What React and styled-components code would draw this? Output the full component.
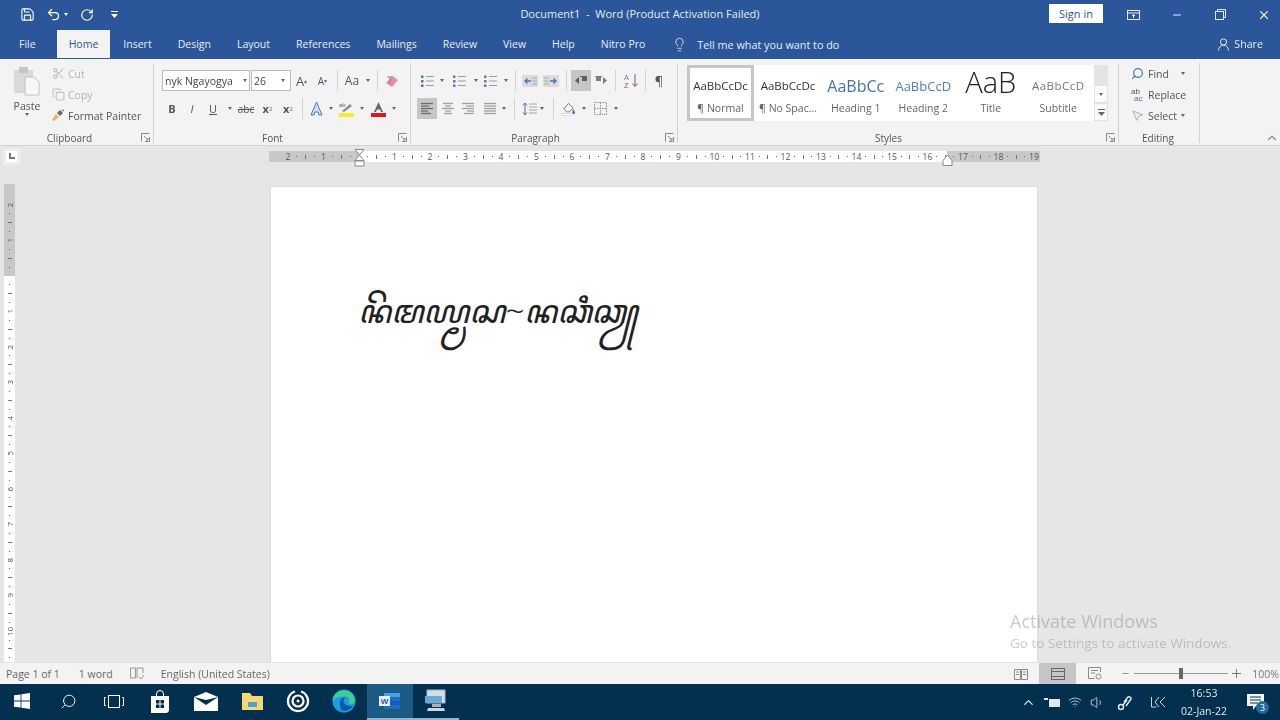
import React from 'react';
import styled, { createGlobalStyle } from 'styled-components';
import { Save, Undo2, RotateCw, Scissors, Copy, Lightbulb, UserRound, Search, Minus, X, ChevronUp, Volume1, Wifi, MousePointer2 } from 'lucide-react';

const Global = createGlobalStyle`
  html, body { margin: 0; padding: 0; background: #e6e6e6; }
  body { font-family: "Open Sans", "Liberation Sans", sans-serif; }
`;

const Screen = styled.div`
  position: relative;
  width: 1280px;
  height: 720px;
  overflow: hidden;
  display: flex;
  flex-direction: column;
  filter: blur(0.35px);
`;

/* title bar */
const TitleBar = styled.div`
  height: 29px;
  background: #2b579a;
  display: flex;
  align-items: center;
  color: #fff;
  flex: none;
`;
const Quick = styled.div`
  width: 1049px;
  flex: none;
  display: flex;
  align-items: center;
  position: relative;
  padding-left: 19px;
  box-sizing: border-box;
`;
const DocTitle = styled.div`
  position: absolute;
  left: 0;
  right: -231px;
  top: -1px;
  line-height: 16px;
  text-align: center;
  font-size: 11px;
  color: #e4eaf4;
  pointer-events: none;
`;
const QuickBtn = styled.span`
  display: inline-flex;
  width: ${p => p.$w || 16}px;
  margin-right: ${p => p.$mr || 0}px;
  justify-content: center;
  align-items: center;
`;
const SignIn = styled.div`
  width: 54px;
  height: 19px;
  flex: none;
  margin-top: -2px;
  background: #fff;
  color: #2b579a;
  font-size: 11px;
  display: flex;
  align-items: center;
  justify-content: center;
`;
const WinBtns = styled.div`
  display: flex;
  flex: none;
  margin-left: 9px;
`;
const WinBtn = styled.span`
  width: 43.5px;
  flex: none;
  display: flex;
  justify-content: center;
  align-items: center;
`;

/* tab row */
const TabBar = styled.div`
  height: 30px;
  background: #2b579a;
  display: flex;
  align-items: flex-end;
  padding-left: 6px;
  flex: none;
  border-bottom: 1px solid #2b579a;
  box-sizing: border-box;
`;
const Tab = styled.div`
  height: 28px;
  padding: 0 ${p => p.$pad || 13}px;
  margin-right: ${p => p.$mr || 0}px;
  display: flex;
  align-items: center;
  font-size: 10.5px;
  color: ${p => (p.$active ? '#2b579a' : '#e6ecf5')};
  background: ${p => (p.$active ? '#f3f3f3' : 'transparent')};
  white-space: nowrap;
`;
const TellMe = styled.div`
  display: flex;
  align-items: center;
  gap: 10px;
  height: 28px;
  margin-left: 14px;
  font-size: 10.8px;
  color: #e6ecf5;
`;
const Share = styled.div`
  margin-left: auto;
  margin-right: 17px;
  height: 28px;
  display: flex;
  align-items: center;
  gap: 3px;
  font-size: 10.7px;
  color: #e6ecf5;
`;

/* ribbon */
const Ribbon = styled.div`
  height: 87px;
  background: #f3f3f3;
  border-bottom: 1px solid #d4d4d4;
  box-sizing: border-box;
  display: flex;
  padding-top: 4px;
  flex: none;
  position: relative;
`;
const Group = styled.div`
  width: ${p => p.$w}px;
  height: 80px;
  margin-right: ${p => (p.$last ? 0 : 1)}px;
  border-right: 1px solid #d2d2d2;
  box-sizing: border-box;
  display: flex;
  flex-direction: column;
  flex: none;
`;
const GroupBody = styled.div`
  height: 68px;
  flex: none;
  display: flex;
  padding-left: ${p => p.$pl || 0}px;
  padding-top: ${p => p.$pt || 0}px;
  box-sizing: border-box;
  flex-direction: ${p => (p.$col ? 'column' : 'row')};
  gap: ${p => p.$gap || 0}px;
`;
const GroupFoot = styled.div`
  display: flex;
  align-items: center;
  font-size: 10px;
  color: #555;
  height: 13px;
  padding-right: 3px;
`;
const FootLabel = styled.div`
  flex: 1;
  text-align: center;
  padding-right: ${p => p.$pr || 0}px;
`;
const Launcher = styled.svg`
  width: 9px;
  height: 9px;
  flex: none;
`;
const Row = styled.div`
  height: 21px;
  display: flex;
  align-items: center;
`;
const Cell = styled.div`
  width: ${p => p.$w || 20}px;
  height: 21px;
  flex: none;
  display: flex;
  align-items: center;
  justify-content: center;
  font-size: ${p => p.$fs || 11}px;
  font-weight: ${p => (p.$bold ? 700 : 400)};
  font-style: ${p => (p.$it ? 'italic' : 'normal')};
  text-decoration: ${p => (p.$ul ? 'underline' : 'none')};
  color: #555;
  background: ${p => (p.$on ? '#c6c6c6' : 'transparent')};
`;
const Sep = styled.div`
  width: ${p => p.$w || 8}px;
  height: 21px;
  flex: none;
  display: flex;
  justify-content: center;
  &::after { content: ''; width: 1px; height: 100%; background: #d2d2d2; }
`;
const CaretBox = styled.span`
  width: ${p => p.$w || 10}px;
  flex: none;
  display: flex;
  justify-content: center;
  &::after {
    content: '';
    border-left: 2.5px solid transparent;
    border-right: 2.5px solid transparent;
    border-top: 3px solid ${p => p.$c || '#666'};
  }
`;
const PasteCol = styled.div`
  width: 44px;
  margin-left: 5px;
  display: flex;
  flex-direction: column;
  align-items: center;
  padding-top: 3px;
  font-size: 10.5px;
  color: #555;
`;
const PasteLabel = styled.div`
  margin-top: 3px;
  line-height: 14px;
`;
const SmallList = styled.div`
  display: flex;
  flex-direction: column;
  margin-left: 2px;
`;
const SmallBtn = styled.div`
  height: 21px;
  display: flex;
  align-items: center;
  gap: 3px;
  font-size: 10.5px;
  white-space: nowrap;
  color: ${p => (p.$off ? '#b4b4b4' : '#555')};
`;
const IconSlot = styled.span`
  width: ${p => p.$w || 16}px;
  display: inline-flex;
  justify-content: center;
  flex: none;
`;
const FontSelect = styled.div`
  width: ${p => p.$w}px;
  height: 21px;
  box-sizing: border-box;
  background: #fff;
  border: 1px solid #bcbcbc;
  margin-right: ${p => p.$mr || 0}px;
  display: flex;
  align-items: center;
  justify-content: space-between;
  font-size: 10.5px;
  color: #444;
  padding-left: 2px;
  white-space: nowrap;
  overflow: hidden;
  flex: none;
`;

/* styles gallery */
const Gallery = styled.div`
  margin: 2px 0 0 8px;
  width: 421px;
  height: 56px;
  display: flex;
  background: #fff;
  box-sizing: border-box;
`;
const StyleItem = styled.div`
  width: ${p => p.$w || 67.5}px;
  height: 56px;
  flex: none;
  box-sizing: border-box;
  border: 3px solid ${p => (p.$sel ? '#c6c6c6' : 'transparent')};
  display: flex;
  flex-direction: column;
  align-items: center;
  overflow: hidden;
`;
const Sample = styled.div`
  height: 33px;
  flex: none;
  width: 100%;
  overflow: hidden;
  white-space: nowrap;
  text-align: center;
  line-height: ${p => p.$lh || 36}px;
  font-size: ${p => p.$fs || 11.5}px;
  font-weight: ${p => p.$fw || 400};
  color: ${p => p.$c || '#333'};
  letter-spacing: ${p => p.$ls || 0}px;
`;
const StyleName = styled.div`
  font-size: 10.5px;
  line-height: 14px;
  color: #666;
  white-space: nowrap;
`;
const GalleryScroll = styled.div`
  margin-left: 2px;
  width: 14px;
  display: flex;
  flex-direction: column;
`;
const ScrollBtn = styled.div`
  height: ${p => p.$h}px;
  box-sizing: border-box;
  background: ${p => (p.$off ? '#e4e4e4' : '#fbfbfb')};
  border: 1px solid #e2e2e2;
  display: flex;
  flex-direction: column;
  align-items: center;
  justify-content: center;
  gap: 1px;
`;
const Collapse = styled.span`
  position: absolute;
  right: 1px;
  bottom: 0;
  color: #8a8a8a;
  line-height: 0;
`;

/* workspace */
const Workspace = styled.div`
  flex: 1;
  min-height: 0;
  background: #e6e6e6;
  display: flex;
  flex-direction: column;
  overflow: hidden;
`;
const RulerRow = styled.div`
  height: 40px;
  flex: none;
  display: flex;
  box-sizing: border-box;
  padding: 2px 0 0 3px;
  align-items: flex-start;
`;
const CornerBox = styled.div`
  width: 17px;
  height: 17px;
  box-sizing: border-box;
  border: 3px solid #ededed;
  background: #fff;
  display: flex;
  align-items: center;
  justify-content: center;
  flex: none;
`;
const HRuler = styled.div`
  position: relative;
  margin: 3px 0 0 249px;
  width: 771px;
  height: 11px;
  display: flex;
  background: linear-gradient(to right, #c8c8c8 91px, #fff 91px, #fff 678px, #c8c8c8 678px);
`;
const RulerLead = styled.div`
  flex: none;
  height: ${p => p.$s}px;
`;
const HLead = styled.div`
  flex: none;
  width: 14.6px;
`;
const HCell = styled.div`
  flex: none;
  width: 35.5px;
  display: grid;
  grid-template-columns: repeat(4, 1fr);
  align-items: center;
  justify-items: center;
  font-size: 8.5px;
  color: #555;
  line-height: 11px;
`;
const Dot = styled.i`
  width: 1px;
  height: 1px;
  background: #666;
  display: block;
`;
const Bar = styled.i`
  width: 1px;
  height: 4px;
  background: #777;
  display: block;
`;
const VBar = styled(Bar)`
  width: 4px;
  height: 1px;
`;
const Marker = styled.svg`
  position: absolute;
  top: -2px;
  left: ${p => p.$x}px;
`;
const DocRow = styled.div`
  flex: 1;
  min-height: 0;
  display: flex;
  align-items: flex-start;
`;
const VRuler = styled.div`
  margin: -2px 0 0 4px;
  width: 11px;
  height: 478px;
  flex: none;
  display: flex;
  flex-direction: column;
  overflow: hidden;
  background: linear-gradient(to bottom, #c8c8c8 92px, #fff 92px);
`;
const VCell = styled.div`
  flex: none;
  height: 35.5px;
  display: grid;
  grid-template-rows: repeat(4, 1fr);
  align-items: center;
  justify-items: center;
  font-size: 8px;
  line-height: 8px;
  color: #555;
`;
const VNum = styled.span`
  writing-mode: vertical-rl;
  transform: rotate(180deg);
`;
const Page = styled.div`
  margin-left: 255px;
  width: 768px;
  height: 100%;
  background: #fff;
  box-sizing: border-box;
  border: 1px solid #dcdcdc;
  border-bottom: none;
  padding: 92px 0 0 87px;
  flex: none;
`;
const ScriptLine = styled.div`
  font-family: "Noto Sans", "DejaVu Sans", sans-serif;
  font-size: 33px;
  font-style: italic;
  font-weight: 300;
  line-height: 64px;
  color: #222;
  white-space: nowrap;
`;
const Activate = styled.div`
  position: absolute;
  left: 1010px;
  top: 609px;
  color: rgba(130, 130, 130, 0.42);
  pointer-events: none;
`;
const ActivateTitle = styled.div`
  font-size: 18px;
  line-height: 24px;
`;
const ActivateSub = styled.div`
  font-size: 13.5px;
  line-height: 18px;
  margin-top: 1px;
  white-space: nowrap;
`;

/* status bar */
const StatusBar = styled.div`
  height: 22px;
  flex: none;
  background: #f3f3f3;
  display: flex;
  align-items: center;
  font-size: 10.5px;
  color: #666;
  border-top: 1px solid #e2e2e2;
  box-sizing: border-box;
`;
const StatusText = styled.span`
  margin-left: ${p => p.$ml}px;
  white-space: nowrap;
`;
const ViewBtn = styled.div`
  width: 37px;
  height: 21px;
  display: flex;
  align-items: center;
  justify-content: center;
  background: ${p => (p.$on ? '#c6c6c6' : 'transparent')};
`;
const ViewGroup = styled.div`
  margin-left: auto;
  display: flex;
  align-items: center;
`;
const Slider = styled.div`
  width: 94px;
  height: 1px;
  background: #9a9a9a;
  position: relative;
  margin: 0 4px;
`;
const Thumb = styled.span`
  position: absolute;
  left: 45px;
  top: -5px;
  width: 4px;
  height: 11px;
  background: #666;
`;
const Zoomer = styled.div`
  display: flex;
  align-items: center;
  margin-left: 8px;
  color: #777;
`;
const Percent = styled.span`
  margin-left: 11px;
  margin-right: 1px;
`;

/* taskbar */
const Taskbar = styled.div`
  height: 36px;
  flex: none;
  background: #04304f;
  display: flex;
  align-items: stretch;
  color: #fff;
`;
const TaskItems = styled.div`
  display: flex;
  margin-left: -1px;
`;
const TaskItem = styled.div`
  width: 46px;
  display: flex;
  align-items: center;
  justify-content: center;
  box-sizing: border-box;
  background: ${p => (p.$active ? '#1c5c84' : 'transparent')};
  border-bottom: 2px solid ${p => (p.$open ? '#8db6d2' : 'transparent')};
`;
const Tray = styled.div`
  margin-left: auto;
  padding-right: 5px;
  display: flex;
  align-items: center;
  color: #dfe8ee;
`;
const TrayItem = styled.span`
  width: ${p => p.$w || 23}px;
  display: flex;
  justify-content: center;
`;
const Clock = styled.div`
  width: 62px;
  font-size: 10.5px;
  line-height: 18px;
  text-align: center;
  color: #dfe8ee;
`;
const Notify = styled.div`
  position: relative;
  width: 40px;
  display: flex;
  justify-content: center;
`;
const NotifyBadge = styled.span`
  position: absolute;
  left: 21px;
  top: 7px;
  width: 13px;
  height: 13px;
  border-radius: 50%;
  background: #1f6d9e;
  font-size: 9px;
  line-height: 13px;
  text-align: center;
  color: #fff;
`;

const LauncherIcon = () => (
  <Launcher viewBox="0 0 9 9" fill="none" stroke="#8a8a8a">
    <path d="M.5 8.5v-8h8M8.5 4v4.500H4M3 3l4 4M7 5v2H5" />
  </Launcher>
);

const Foot = ({ label, launcher = true, pr }) => (
  <GroupFoot>
    <FootLabel $pr={pr}>{label}</FootLabel>
    {launcher && <LauncherIcon />}
  </GroupFoot>
);

const Lines = ({ kind, on }) => {
  const rows = {
    left: [[1, 12], [1, 8], [1, 12], [1, 7], [1, 10]],
    center: [[2, 10], [4, 6], [1, 12], [4, 6], [3, 8]],
    right: [[1, 12], [5, 8], [1, 12], [6, 7], [3, 10]],
    justify: [[1, 12], [1, 12], [1, 12], [1, 12], [1, 12]],
  }[kind];
  return (
    <svg width="14" height="13" viewBox="0 0 14 13" stroke={on ? '#6c6c6c' : '#a0a0a0'} strokeWidth="1.3">
      {rows.map(([x, w], i) => <path key={i} d={`M${x} ${1.500 + i * 2.500}h${w}`} />)}
    </svg>
  );
};

const ListIcon = ({ num }) => (
  <svg width="15" height="14" viewBox="0 0 15 14">
    <path d="M6 2.500h8M6 7h8M6 11.500h8" stroke="#9b9b9b" strokeWidth="1.200" />
    <g fill={num ? '#5b7fae' : '#4d79b0'}>
      <rect x="1" y="1.500" width="2.500" height="2.500" /><rect x="1" y="6" width="2.500" height="2.500" /><rect x="1" y="10.500" width="2.500" height="2.500" />
    </g>
  </svg>
);

const Indent = ({ flip }) => (
  <svg width="16" height="14" viewBox="0 0 16 14" style={flip ? { transform: 'scaleX(-1)' } : undefined}>
    <rect x="0" y="1" width="16" height="12" fill="#dcdcdc" />
    <path d="M10 4h5M10 7h5M10 10h5" stroke="#a8a8a8" />
    <path d="M9 7H3M5.500 4.500 3 7l2.500 2.500" stroke="#3f76b5" strokeWidth="1.300" fill="none" />
  </svg>
);

const Word = () => (
  <svg width="22" height="18" viewBox="0 0 22 18">
    <rect x="5" y="1" width="16" height="16" rx="1" fill="#1d6fc0" />
    <path d="M5 1h16v4H5z" fill="#41a5ee" /><path d="M5 9h16v4H5z" fill="#185abd" />
    <rect x="0" y="4" width="11" height="10" fill="#eaf2fb" />
    <text x="5.500" y="12" textAnchor="middle" fontSize="8" fontWeight="700" fill="#185abd" fontFamily="Liberation Sans">W</text>
  </svg>
);

const rulerNumbers = ['2', '1', '', ...Array.from({ length: 19 }, (_, i) => String(i + 1))];

export default function App() {
  return (
    <Screen>
      <Global />
      <TitleBar>
        <Quick>
          <DocTitle>Document1 &nbsp;-&nbsp; Word (Product Activation Failed)</DocTitle>
          <QuickBtn $mr={10}><Save size={15} strokeWidth={1.700} /></QuickBtn>
          <QuickBtn $w={16}><Undo2 size={15} strokeWidth={2} /></QuickBtn>
          <QuickBtn $w={10} $mr={8}><CaretBox $c="#fff" /></QuickBtn>
          <QuickBtn $mr={15}><RotateCw size={14} strokeWidth={2} /></QuickBtn>
          <QuickBtn $w={8}>
            <svg width="7" height="8" viewBox="0 0 7 8" fill="#fff"><rect y="0" width="7" height="1" /><path d="M0 3h7L3.500 7z" /></svg>
          </QuickBtn>
        </Quick>
        <SignIn>Sign in</SignIn>
        <WinBtns>
          <WinBtn>
            <svg width="13" height="10" viewBox="0 0 13 10" fill="none" stroke="#e6ecf5"><rect x=".5" y=".5" width="12" height="9" /><path d="M.5 3h12M6.500 8V5M5 6l1.500-1.500L8 6" /></svg>
          </WinBtn>
          <WinBtn><Minus size={12} color="#e6ecf5" /></WinBtn>
          <WinBtn>
            <svg width="11" height="11" viewBox="0 0 11 11" fill="none" stroke="#e6ecf5"><rect x=".5" y="2.500" width="8" height="8" /><path d="M2.500 2.500v-2h8v8h-2" /></svg>
          </WinBtn>
          <WinBtn><X size={14} color="#e6ecf5" /></WinBtn>
        </WinBtns>
      </TitleBar>

      <TabBar>
        <Tab $mr={8}>File</Tab>
        <Tab $active $pad={12}>Home</Tab>
        <Tab>Insert</Tab>
        <Tab>Design</Tab>
        <Tab>Layout</Tab>
        <Tab>References</Tab>
        <Tab>Mailings</Tab>
        <Tab>Review</Tab>
        <Tab>View</Tab>
        <Tab>Help</Tab>
        <Tab>Nitro Pro</Tab>
        <TellMe>
          <Lightbulb size={15} strokeWidth={1.300} />
          <span>Tell me what you want to do</span>
        </TellMe>
        <Share>
          <UserRound size={15} strokeWidth={1.500} />
          <span>Share</span>
        </Share>
      </TabBar>

      <Ribbon>
        <Group $w={154}>
          <GroupBody>
            <PasteCol>
              <svg width="28" height="30" viewBox="0 0 28 30">
                <rect x="1" y="4" width="19" height="23" rx="1" fill="#d9d9d9" />
                <rect x="6" y="1" width="9" height="6" fill="#c4c4c4" />
                <path d="M12 11h9l5 5v13H12z" fill="#f7f7f7" stroke="#c2c2c2" />
              </svg>
              <PasteLabel>Paste</PasteLabel>
              <CaretBox />
            </PasteCol>
            <SmallList>
              <SmallBtn $off><IconSlot $w={14}><Scissors size={13} color="#bdbdbd" /></IconSlot>Cut</SmallBtn>
              <SmallBtn $off><IconSlot $w={14}><Copy size={13} color="#c4c4c4" /></IconSlot>Copy</SmallBtn>
              <SmallBtn>
                <IconSlot $w={14}>
                  <svg width="14" height="13" viewBox="0 0 14 13">
                    <path d="M1 11l4-6 3 3-5 4z" fill="#e3b562" /><path d="M6 4l3-3 3 3-3 3z" fill="#6a6a6a" /><circle cx="12" cy="1.500" r="1" fill="#7a7a7a" />
                  </svg>
                </IconSlot>
                Format Painter
              </SmallBtn>
            </SmallList>
          </GroupBody>
          <Foot label="Clipboard" pr={2} />
        </Group>

        <Group $w={256}>
          <GroupBody $col $pt={7} $pl={7} $gap={7}>
            <Row>
              <FontSelect $w={88} $mr={1}>
                <span>nyk Ngayogya</span><CaretBox $w={9} />
              </FontSelect>
              <FontSelect $w={40}>
                <span>26</span><CaretBox $w={14} />
              </FontSelect>
              <Cell $w={21} $fs={13}>A<sup style={{ fontSize: 6, color: '#3f76b5' }}>▴</sup></Cell>
              <Cell $w={21} $fs={10}>A<sup style={{ fontSize: 6, color: '#3f76b5' }}>▾</sup></Cell>
              <Sep />
              <Cell $w={22} $fs={12}>Aa</Cell>
              <CaretBox />
              <Sep />
              <Cell>
                <svg width="15" height="14" viewBox="0 0 15 14">
                  <path d="M2 9l6-7 6 4-6 7z" fill="#ee8d9a" /><path d="M3 3h6M6 3v7" stroke="#7d8fa8" strokeWidth="1.200" />
                </svg>
              </Cell>
            </Row>
            <Row>
              <Cell $bold $fs={11}>B</Cell>
              <Cell $it $fs={11}>I</Cell>
              <Cell $w={22} $ul $fs={11}>U</Cell>
              <CaretBox $w={11} />
              <Cell $w={22} $fs={10}><s>abc</s></Cell>
              <Cell $w={21} $fs={11}><b>x</b><sub style={{ fontSize: 6, color: '#3f76b5' }}>2</sub></Cell>
              <Cell $w={20} $fs={11}><b>x</b><sup style={{ fontSize: 6, color: '#3f76b5' }}>2</sup></Cell>
              <Sep $w={9} />
              <Cell $w={19}>
                <svg width="15" height="15" viewBox="0 0 15 15" fill="#cfe0f3" stroke="#4d79b0"><path d="M7.500 1 13 14h-3l-1-3H6l-1 3H2z" /></svg>
              </Cell>
              <CaretBox />
              <Cell $w={21}>
                <svg width="17" height="16" viewBox="0 0 17 16">
                  <rect x="1" y="12" width="15" height="4" fill="#f5ec2a" />
                  <path d="M4 10l8-7 2 2-8 6z" fill="#8c8c8c" />
                  <text x="1" y="6" fontSize="6" fill="#6a6a6a" fontFamily="Liberation Sans">ab</text>
                </svg>
              </Cell>
              <CaretBox />
              <Cell $w={22}>
                <svg width="15" height="16" viewBox="0 0 15 16">
                  <rect x="0" y="12" width="15" height="4" fill="#e8141c" />
                  <path d="M7.500 1 12 11h-2l-1-2.500H6L5 11H3z" fill="#666" />
                </svg>
              </Cell>
              <CaretBox />
            </Row>
          </GroupBody>
          <Foot label="Font" pr={8} />
        </Group>

        <Group $w={266}>
          <GroupBody $col $pt={7} $pl={5} $gap={7}>
            <Row>
              <Cell $w={20}><ListIcon /></Cell><CaretBox />
              <Cell $w={24}><ListIcon num /></Cell><CaretBox $w={9} />
              <Cell $w={21}><ListIcon num /></Cell><CaretBox $w={9} />
              <Sep $w={10} />
              <Cell $w={20}><Indent /></Cell>
              <Cell $w={21}><Indent flip /></Cell>
              <Sep $w={10} />
              <Cell $w={20} $on>
                <svg width="14" height="11" viewBox="0 0 14 11" fill="#5f5f5f"><path d="M1 5.500 5 2v7zM6 1h7v1H6zM8 2h5v4H8z" /></svg>
              </Cell>
              <Cell $w={20}>
                <svg width="14" height="11" viewBox="0 0 14 11" fill="#7d7d7d"><path d="M13 5.500 9 2v7zM1 1h7v1H1zM2 2h5v4H2z" /></svg>
              </Cell>
              <Sep $w={8} />
              <Cell $w={24}>
                <svg width="15" height="15" viewBox="0 0 15 15" fill="none">
                  <text x="0" y="7" fontSize="7.500" fill="#5b7fae" fontFamily="Liberation Sans">A</text>
                  <text x="0" y="15" fontSize="7.500" fill="#b0458f" fontFamily="Liberation Sans">Z</text>
                  <path d="M11 1v12M8.500 10.500 11 13.500l2.500-3" stroke="#666" />
                </svg>
              </Cell>
              <Sep $w={4} />
              <Cell $w={24} $fs={13}>¶</Cell>
            </Row>
            <Row>
              <Cell $w={20} $on><Lines kind="left" on /></Cell>
              <Cell $w={21}><Lines kind="center" /></Cell>
              <Cell $w={20}><Lines kind="right" /></Cell>
              <Cell $w={23}><Lines kind="justify" /></Cell>
              <CaretBox $w={6} />
              <Sep $w={14} />
              <Cell $w={18}>
                <svg width="16" height="16" viewBox="0 0 16 16">
                  <path d="M3 2v12M1 4.500 3 2l2 2.500M1 11.500 3 14l2-2.500" stroke="#3f76b5" fill="none" />
                  <path d="M7 3h8M7 6h8M7 9h8M7 12h8" stroke="#a6a6a6" strokeWidth="1.200" />
                </svg>
              </Cell>
              <CaretBox $w={6} />
              <Sep $w={16} />
              <Cell $w={16}>
                <svg width="17" height="16" viewBox="0 0 17 16">
                  <path d="M3 8l5-6 5 5-4 4H6z" fill="none" stroke="#777" />
                  <path d="M13 8c1 2 2 3 2 4a1.500 1.500 0 0 1-3 0c0-1 0-2 1-4z" fill="#4d79b0" />
                  <rect x="1" y="13" width="11" height="2" fill="#fff" stroke="#bdbdbd" strokeWidth=".5" />
                </svg>
              </Cell>
              <CaretBox $w={14} />
              <Cell $w={18}>
                <svg width="13" height="13" viewBox="0 0 13 13" fill="none" stroke="#8f8f8f" strokeDasharray="1.500 1"><rect x=".5" y=".5" width="12" height="12" /><path d="M6.500 .5v12M.5 6.500h12" /></svg>
              </Cell>
              <CaretBox $w={14} />
            </Row>
          </GroupBody>
          <Foot label="Paragraph" pr={6} />
        </Group>

        <Group $w={440}>
          <GroupBody>
            <Gallery>
              <StyleItem $sel $w={67}><Sample>AaBbCcDc</Sample><StyleName>¶ Normal</StyleName></StyleItem>
              <StyleItem $w={68}><Sample>AaBbCcDc</Sample><StyleName>¶ No Spac...</StyleName></StyleItem>
              <StyleItem><Sample $fs={16} $c="#4471a8">AaBbCc</Sample><StyleName>Heading 1</StyleName></StyleItem>
              <StyleItem><Sample $fs={13} $c="#4f7fb8">AaBbCcD</Sample><StyleName>Heading 2</StyleName></StyleItem>
              <StyleItem><Sample $fs={29} $fw={300} $c="#222" $lh={28}>AaB</Sample><StyleName>Title</StyleName></StyleItem>
              <StyleItem><Sample $fs={11.500} $c="#777" $ls={0.500}>AaBbCcD</Sample><StyleName>Subtitle</StyleName></StyleItem>
              <GalleryScroll>
                <ScrollBtn $h={20} $off />
                <ScrollBtn $h={18}><CaretBox /></ScrollBtn>
                <ScrollBtn $h={18}><svg width="7" height="7" viewBox="0 0 7 7" fill="#666"><rect width="7" height="1" /><path d="M0 3h7L3.500 7z" /></svg></ScrollBtn>
              </GalleryScroll>
            </Gallery>
          </GroupBody>
          <Foot label="Styles" pr={8} />
        </Group>

        <Group $w={80} $last>
          <GroupBody $pl={7}>
            <SmallList>
              <SmallBtn><IconSlot><Search size={13} color="#3f76b5" strokeWidth={2.200} style={{ transform: 'scaleX(-1)' }} /></IconSlot>Find<CaretBox $w={22} /></SmallBtn>
              <SmallBtn>
                <IconSlot>
                  <svg width="16" height="15" viewBox="0 0 16 15">
                    <text x="2" y="7" fontSize="8" fill="#555" fontFamily="Liberation Sans">ab</text>
                    <text x="5" y="14" fontSize="8" fill="#3f76b5" fontFamily="Liberation Sans">ac</text>
                  </svg>
                </IconSlot>
                Replace
              </SmallBtn>
              <SmallBtn><IconSlot><MousePointer2 size={13} color="#8a8a8a" strokeWidth={1.200} /></IconSlot>Select<CaretBox $w={6} /></SmallBtn>
            </SmallList>
          </GroupBody>
          <Foot label="Editing" launcher={false} />
        </Group>
        <Collapse><ChevronUp size={14} /></Collapse>
      </Ribbon>

      <Workspace>
        <RulerRow>
          <CornerBox>
            <svg width="7" height="7" viewBox="0 0 7 7" fill="#777"><path d="M1 0h2v4h4v2H1z" /></svg>
          </CornerBox>
          <HRuler>
            <HLead />
            {rulerNumbers.map((n, i) => (
              <HCell key={i}>
                <span>{n}</span>
                {i < rulerNumbers.length - 1 && <><Dot /><Bar /><Dot /></>}
              </HCell>
            ))}
            <Marker $x={85} width="11" height="19" viewBox="0 0 11 19" fill="#fdfdfd" stroke="#8a8a8a">
              <path d="M1 .5h9L5.500 6zM5.500 6 10 11.500H1z" /><rect x="1" y="12" width="9" height="5" />
            </Marker>
            <Marker $x={673} width="11" height="19" viewBox="0 0 11 19" fill="#fdfdfd" stroke="#8a8a8a">
              <path d="M5.500 6 10 11.500v5H1v-5z" />
            </Marker>
          </HRuler>
        </RulerRow>
        <DocRow>
          <VRuler>
            <RulerLead $s={16.600} />
            {['2', '1', '', '1', '2', '3', '4', '5', '6', '7', '8', '9', '10', '11'].map((n, i) => (
              <VCell key={i}>
                <VNum>{n}</VNum><Dot /><VBar /><Dot />
              </VCell>
            ))}
          </VRuler>
          <Page>
            <ScriptLine lang="jv">ꦤꦼꦩꦪ꧀ꦩꦱ~ꦤꦕꦶꦕꦾ</ScriptLine>
          </Page>
        </DocRow>
      </Workspace>

      <Activate>
        <ActivateTitle>Activate Windows</ActivateTitle>
        <ActivateSub>Go to Settings to activate Windows.</ActivateSub>
      </Activate>

      <StatusBar>
        <StatusText $ml={6}>Page 1 of 1</StatusText>
        <StatusText $ml={19}>1 word</StatusText>
        <StatusText $ml={17}>
          <svg width="14" height="13" viewBox="0 0 14 13" fill="none" stroke="#9a9a9a" style={{ display: 'block' }}><path d="M.5 1h5v10h-5zM7 1h6v5M7 1v10M9 10l2 2 3-4" /></svg>
        </StatusText>
        <StatusText $ml={17}>English (United States)</StatusText>
        <ViewGroup>
          <ViewBtn>
            <svg width="14" height="12" viewBox="0 0 14 12" fill="none" stroke="#8a8a8a"><path d="M.5 1.500h6v10h-6zM7.500 1.500h6v10h-6zM2 4h3M2 6.500h3M9 4h3M9 6.500h3" /></svg>
          </ViewBtn>
          <ViewBtn $on>
            <svg width="14" height="12" viewBox="0 0 14 12" fill="none" stroke="#666"><rect x=".5" y=".5" width="13" height="11" /><path d="M.5 3.500h13M.5 8.500h13" /></svg>
          </ViewBtn>
          <ViewBtn>
            <svg width="14" height="13" viewBox="0 0 14 13" fill="none" stroke="#8a8a8a"><path d="M12.500 5V.5h-12v11h6M3 3.500h7M3 6h4" /><circle cx="10.500" cy="9.500" r="2.500" /></svg>
          </ViewBtn>
          <Zoomer>
            <Minus size={9} />
            <Slider><Thumb /></Slider>
            <svg width="9" height="9" viewBox="0 0 9 9" stroke="#777"><path d="M0 4.500h9M4.500 0v9" /></svg>
            <Percent>100%</Percent>
          </Zoomer>
        </ViewGroup>
      </StatusBar>

      <Taskbar>
        <TaskItems>
          <TaskItem>
            <svg width="16" height="16" viewBox="0 0 16 16" fill="#fff"><path d="M0 2.300 6.600 1.400V7.600H0zM7.400 1.300 16 0V7.600H7.400zM0 8.400H6.600V14.600L0 13.700zM7.400 8.400H16V16L7.400 14.700z" /></svg>
          </TaskItem>
          <TaskItem><Search size={17} strokeWidth={1.300} style={{ transform: 'scaleX(-1)' }} /></TaskItem>
          <TaskItem>
            <svg width="20" height="13" viewBox="0 0 20 13" fill="none" stroke="#fff"><rect x="4.500" y=".5" width="11" height="12" /><path d="M2 2.500H.5v8H2M18 2.500h1.500v8H18" /></svg>
          </TaskItem>
          <TaskItem>
            <svg width="20" height="23" viewBox="0 0 20 23" fill="#fff">
              <path d="M6.500 6V4a3.500 3.500 0 0 1 7 0v2" fill="none" stroke="#fff" />
              <path d="M1 6h18v15l-2 2H1z" />
              <path d="M6 10h3.500v3.500H6zM10.500 10H14v3.500h-3.500zM6 14.500h3.500V18H6zM10.500 14.500H14V18h-3.500z" fill="#04304f" />
            </svg>
          </TaskItem>
          <TaskItem>
            <svg width="24" height="19" viewBox="0 0 24 19"><path d="M0 5 12 0l12 5v14H0z" fill="#fff" /><path d="M0 5l12 8 12-8-12 3z" fill="#04304f" /></svg>
          </TaskItem>
          <TaskItem>
            <svg width="21" height="18" viewBox="0 0 21 18"><path d="M0 1h8l2 3h11v14H0z" fill="#f7d774" /><rect x="6" y="10" width="9" height="5" fill="#4aa3d8" /></svg>
          </TaskItem>
          <TaskItem>
            <svg width="24" height="24" viewBox="0 0 24 24" fill="none" stroke="#fff"><path d="M15 2.500a10 10 0 1 1-6 0" strokeWidth="2.300" /><circle cx="12" cy="12" r="5.500" strokeWidth="2.200" /><circle cx="12" cy="12" r="1.500" fill="#fff" stroke="none" /></svg>
          </TaskItem>
          <TaskItem>
            <svg width="24" height="24" viewBox="0 0 24 24">
              <circle cx="12" cy="12" r="11.500" fill="#1b9de2" />
              <path d="M1 9C4 2 12 0 17 2.500c4 2 6 6 6 10 0 2-3 3-7 2 3-3 1-7-3-7C8 7.500 4 8 1 12z" fill="#3fce8e" />
              <path d="M8 13c0-3 3-5 6-4.500-1 0-3 2-2 5 1 3 5 4.500 9 3-2.500 5-9 7-12 4-1-2.500-1-5-1-7.500z" fill="#0b5aa6" />
            </svg>
          </TaskItem>
          <TaskItem $active $open><Word /></TaskItem>
          <TaskItem $open>
            <svg width="22" height="24" viewBox="0 0 22 24">
              <rect x="2" y="1" width="18" height="13" fill="#cfdfe9" stroke="#9db8c9" />
              <path d="M0 7h17v7H0z" fill="#6fa8d6" />
              <path d="M7 15h9v3H7z" fill="#a5b2ba" /><path d="M3 19h16l1 3H2z" fill="#cfd6da" />
            </svg>
          </TaskItem>
        </TaskItems>
        <Tray>
          <TrayItem><ChevronUp size={15} /></TrayItem>
          <TrayItem>
            <svg width="16" height="11" viewBox="0 0 16 11" fill="#dfe8ee"><rect x="5" y="2" width="11" height="8" /><path d="M0 1h4v2H0z" /></svg>
          </TrayItem>
          <TrayItem><Wifi size={14} strokeWidth={1.300} /></TrayItem>
          <TrayItem><Volume1 size={15} strokeWidth={1.300} /></TrayItem>
          <TrayItem $w={33}>
            <svg width="17" height="17" viewBox="0 0 17 17" fill="none" stroke="#dfe8ee" strokeWidth="1.500"><circle cx="4" cy="13" r="2.500" /><path d="M6 11l4-5M9 12l5-7a2 2 0 0 0-3-2L7 8" /></svg>
          </TrayItem>
          <TrayItem $w={31}>
            <svg width="16" height="13" viewBox="0 0 16 13" fill="none" stroke="#c8d6df"><path d="M1.500 1v10h5M9 1 5 6l4 5M15 1l-5 5 5 5" /></svg>
          </TrayItem>
          <Clock>16:53<br />02-Jan-22</Clock>
          <Notify>
            <svg width="17" height="16" viewBox="0 0 17 16" fill="#f2f5f7"><path d="M0 0h17v12H9l-3 4v-4H0z" /><path d="M3 3h11M3 6h11M3 9h8" stroke="#04304f" /></svg>
            <NotifyBadge>3</NotifyBadge>
          </Notify>
        </Tray>
      </Taskbar>
    </Screen>
  );
}
